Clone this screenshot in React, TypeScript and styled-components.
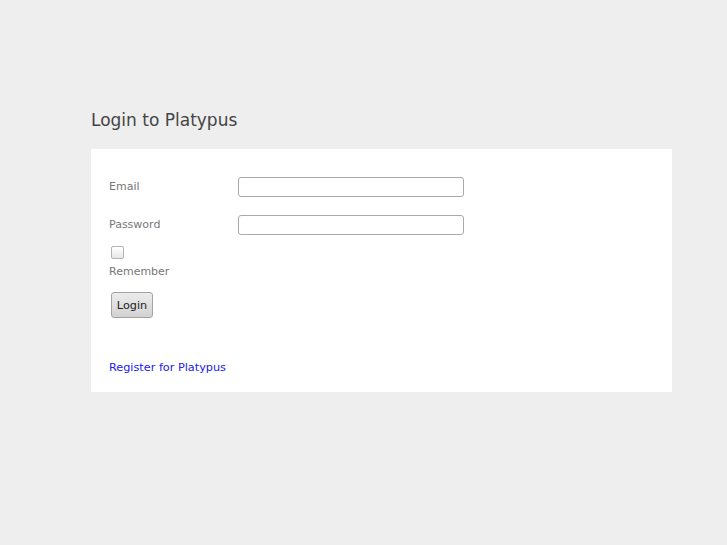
import React from 'react'
import { styled, createGlobalStyle } from 'styled-components';

const GlobalStyle = createGlobalStyle`
    html, body {
        margin: 0;
        padding: 0;
        background-color: #eeeeee;
        font-family: "DejaVu Sans", Verdana, sans-serif;
    }
`;

const App = () => {
  return (
    <>
      <GlobalStyle />
      <Page>
          <Title>Login to Platypus</Title>
          <Panel>
              <Form onSubmit={(e) => e.preventDefault()}>
                  <FieldRow>
                      <Label htmlFor="email">Email</Label>
                      <TextInput id="email" type="text" />
                  </FieldRow>
                  <FieldRow>
                      <Label htmlFor="password">Password</Label>
                      <TextInput id="password" type="password" />
                  </FieldRow>
                  <RememberBlock>
                      <CheckBox id="remember" type="checkbox" />
                      <Label htmlFor="remember">Remember</Label>
                  </RememberBlock>
                  <SubmitButton type="submit">Login</SubmitButton>
              </Form>
              <RegisterLink href="#">Register for Platypus</RegisterLink>
          </Panel>
      </Page>
    </>
  )
};

const Page = styled.div`
    padding: 109px 0 0 91px;
    width: 581px;
`;

const Title = styled.h1`
    margin: 0 0 18px 0;
    font-size: 17px;
    font-weight: 400;
    line-height: 22px;
    color: #444444;
`;

const Panel = styled.div`
    background-color: #ffffff;
    padding: 28px 18px 18px 18px;
    height: 197px;
`;

const Form = styled.form`
    display: grid;
    justify-items: start;
`;

const FieldRow = styled.div`
    display: flex;
    align-items: center;
    height: 20px;
    margin-bottom: 18px;
`;

const Label = styled.label`
    width: 129px;
    font-size: 11px;
    line-height: 16px;
    color: #777777;
`;

const TextInput = styled.input`
    box-sizing: border-box;
    width: 226px;
    height: 20px;
    margin: 0;
    padding: 1px 4px;
    border: 1px solid #a9a9a9;
    border-radius: 3px;
    background: #fff;
    font-family: "DejaVu Sans", sans-serif;
    font-size: 11px;
`;

const RememberBlock = styled.div`
    display: grid;
    gap: 5px;
    margin-top: -7px;
`;

const CheckBox = styled.input`
    appearance: none;
    box-sizing: border-box;
    width: 13px;
    height: 13px;
    margin: 0 0 0 2px;
    border: 1px solid #b4b4b4;
    border-radius: 2px;
    background: linear-gradient(#ffffff, #e8e8e8);
`;

const SubmitButton = styled.button`
    box-sizing: border-box;
    margin: 12px 0 0 2px;
    width: 42px;
    height: 26px;
    padding: 0;
    border: 1px solid #a3a3a3;
    border-radius: 3px;
    background: linear-gradient(#ececec, #d2d2d2);
    font-family: "DejaVu Sans", sans-serif;
    font-size: 11.25px;
    color: #222222;
`;

const RegisterLink = styled.a`
    display: inline-block;
    margin-top: 42px;
    font-size: 11.25px;
    line-height: 16px;
    color: #2020ee;
    text-decoration: none;
`;

export default App;
